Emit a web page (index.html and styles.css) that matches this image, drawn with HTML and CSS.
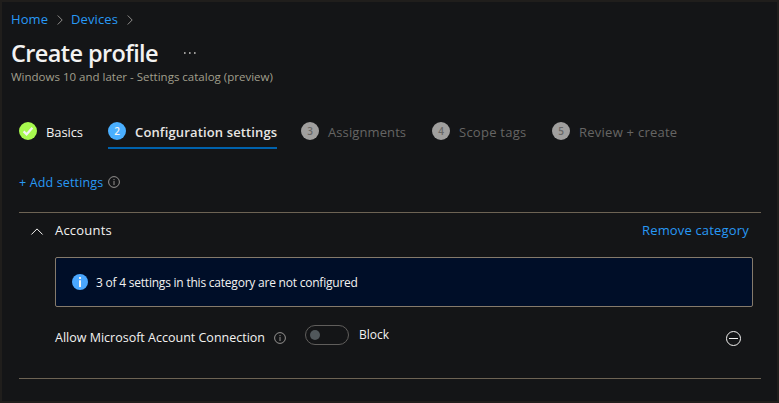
FILE: index.html
```html
<!DOCTYPE html>
<html lang="en">
<head>
<meta charset="utf-8">
<title>Create profile</title>
<link rel="stylesheet" href="styles.css">
</head>
<body>
<main class="blade">
  <nav class="breadcrumb">
    <a class="crumb home">Home</a>
    <svg class="chevron" width="6" height="10" viewBox="0 0 6 10"><path d="M.7.5 5.2 5 .7 9.5"/></svg>
    <a class="crumb devices">Devices</a>
    <svg class="chevron" width="6" height="10" viewBox="0 0 6 10"><path d="M.7.5 5.2 5 .7 9.5"/></svg>
  </nav>
  <header class="heading">
    <h1 class="title">Create profile</h1>
    <svg class="more" width="12" height="2" viewBox="0 0 12 2"><path d="M0 .3h1.6v1.4H0zM5 .3h1.6v1.4H5zM10 .3h1.6v1.4H10z"/></svg>
  </header>
  <p class="subtitle"><span>Windows 10 and later - Settings catalog (preview)</span></p>

  <ol class="steps">
    <li class="step done">
      <svg class="badge" width="18" height="18" viewBox="0 0 18 18"><circle cx="9" cy="9" r="9"/><path d="M4.6 9.4 7.6 12.3 13.4 5.8"/></svg>
      <span class="label basics">Basics</span>
    </li>
    <li class="step current"><span class="badge">2</span><span class="label config">Configuration settings</span></li>
    <li class="step assign"><span class="badge">3</span><span class="label assignments">Assignments</span></li>
    <li class="step scope"><span class="badge">4</span><span class="label scopetags">Scope tags</span></li>
    <li class="step review"><span class="badge">5</span><span class="label reviewcreate">Review + create</span></li>
  </ol>

  <div class="add">
    <a class="add-link">+ Add settings</a>
    <svg class="info" width="12" height="12" viewBox="0 0 12 12"><circle cx="6" cy="6" r="5.4"/><path d="M6 5v4M6 3v1.2"/></svg>
  </div>

  <section class="category">
    <div class="category-head">
      <svg class="collapse" width="12" height="7" viewBox="0 0 12 7"><path d="M.4 6.5 6 .9l5.6 5.6"/></svg>
      <h2 class="category-name"><span>Accounts</span></h2>
      <a class="remove">Remove category</a>
    </div>
    <div class="banner">
      <svg class="banner-icon" width="16" height="16" viewBox="0 0 16 16"><circle cx="8" cy="8" r="8"/><path d="M7 6.3h2V13H7zM7 3h2v2H7z"/></svg>
      <span class="banner-text">3 of 4 settings in this category are not configured</span>
    </div>
    <div class="setting">
      <span class="setting-name">Allow Microsoft Account Connection</span>
      <svg class="info" width="12" height="12" viewBox="0 0 12 12"><circle cx="6" cy="6" r="5.4"/><path d="M6 5v4M6 3v1.2"/></svg>
      <span class="toggle"></span>
      <span class="toggle-text">Block</span>
      <svg class="minus" width="16" height="16" viewBox="0 0 16 16"><circle cx="8.500" cy="8.500" r="7"/><path d="M4 8.500h9"/></svg>
    </div>
  </section>
</main>
</body>
</html>
```
FILE: styles.css
```css
* { box-sizing: border-box; }
body {
  margin: 0;
  background: #141517;
  color: #f3f2f1;
  font: 13px/20px "Open Sans", "Noto Sans", sans-serif;
}
h1, h2, p, ol { margin: 0; padding: 0; font: inherit; }
svg { display: block; flex: none; fill: none; overflow: visible; }
a { color: #2899f5; }
span, a, h1 { white-space: nowrap; }

.blade {
  height: 403px;
  border: 2px solid #201e1c;
  padding: 7px 16px 0 9px;
}

.breadcrumb { display: flex; align-items: center; height: 20px; }
.crumb { flex: none; }
.home { width: 37px; margin-right: 9px; letter-spacing: .1px; }
.devices { width: 47px; margin: 0 9px 0 8px; letter-spacing: .1px; }
.chevron { stroke: #8d8b89; margin-top: 2px; }

.heading { display: flex; align-items: center; height: 32px; margin-top: 8px; }
.title { flex: none; width: 147px; margin: -1px 27px 0 0; font-size: 23.5px; line-height: 32px; font-weight: 600; letter-spacing: -.6px; }
.more { margin-left: -1px; fill: #c8c6c4; }
.subtitle { height: 16px; font-size: 11.5px; line-height: 16px; color: #a19f8d; }

.steps { display: flex; height: 29px; margin: 35px 0 0 8px; list-style: none; }
.step { display: flex; flex: none; color: #666564; }
.badge {
  flex: none;
  width: 18px;
  height: 18px;
  margin: 2px 9px 0 0;
  border-radius: 50%;
  background: #a09f9e;
  color: #686766;
  font-size: 10px;
  line-height: 18px;
  font-weight: 600;
  text-align: center;
}
.label { line-height: 22px; padding-top: 1px; }
.done { width: 89px; color: #f3f2f1; }
.done .badge { background: none; }
.done circle { fill: #a7f94e; }
.done path { stroke: #f3f2f1; stroke-width: 2.2; }
.basics { letter-spacing: -.1px; }
.current { width: 169px; border-bottom: 2px solid #0062ad; color: #e8e6e4; font-weight: 600; }
.current .badge { background: #4aafff; color: #f3f2f1; }
.config { letter-spacing: .14px; }
.assign { width: 131px; margin-left: 24px; }
.assignments { letter-spacing: .1px; }
.scope { width: 120px; }
.scopetags, .reviewcreate { letter-spacing: .25px; }

.add { display: flex; align-items: center; height: 20px; margin: 23px 0 0 8px; }
.add-link { width: 84px; margin: 1px 5px 0 0; font-size: 12.5px; letter-spacing: .15px; }
.info { stroke: #a19f9d; stroke-width: .9; }

.category {
  height: 167px;
  margin: 20px 0 0 8px;
  border-top: 1px solid #6d6354;
  border-bottom: 1px solid #6d6354;
}
.category-head { display: flex; align-items: center; height: 44px; padding: 0 12px 8px; }
.collapse { margin: 1px 12px 0 0; stroke: #f3f2f1; }
.category-name { flex: 1; margin-top: -2px; letter-spacing: .2px; }
.remove { width: 107px; margin-top: -2px; letter-spacing: .16px; }
.banner {
  display: flex;
  align-items: center;
  height: 50px;
  margin: 0 8px 0 36px;
  padding: 0 16px;
  border: 1px solid #857a6b;
  border-radius: 2px;
  background: #000e28;
}
.banner-icon { margin-right: 8px; fill: #f3f2f1; }
.banner-icon circle { fill: #4aa7ff; }
.banner-text { margin-top: 2px; font-size: 12px; letter-spacing: -.22px; }
.setting { display: flex; align-items: center; height: 62px; padding: 0 20px 0 36px; font-size: 12.5px; }
.setting-name { width: 211px; margin-right: 8px; }
.toggle { width: 44px; height: 20px; margin: -6px 10px 0 19px; border: 1px solid #605e5c; border-radius: 10px; padding: 4px; }
.toggle::before { content: ""; display: block; width: 10px; height: 10px; border-radius: 50%; background: #50575b; }
.toggle-text { flex: 1; margin-top: -6px; font-size: 12px; }
.minus { stroke: #f3f2f1; }
```
